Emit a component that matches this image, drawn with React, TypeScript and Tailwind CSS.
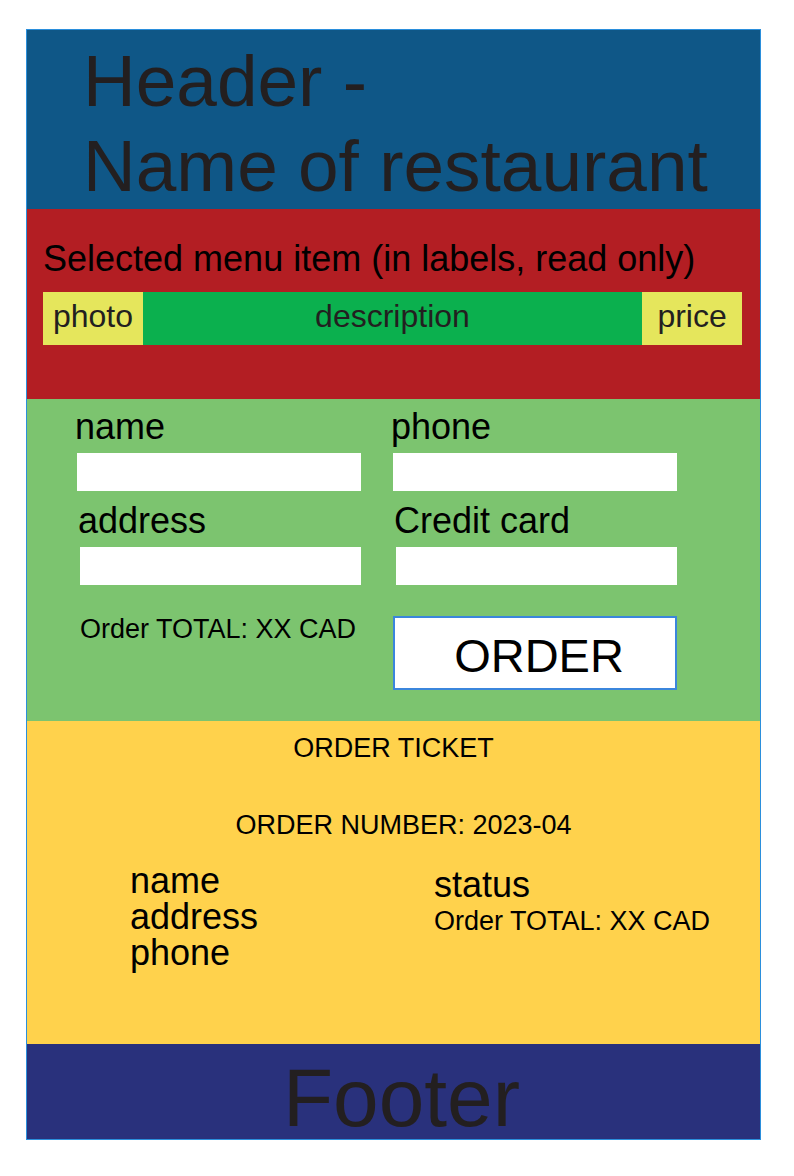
const inputClass = "mt-1.5 h-[38px] w-full bg-white px-2 text-2xl text-black outline-none";
const labelClass = "-ml-0.5 text-[36px] leading-10";

function Field({ id, label, type = "text" }: { id: string; label: string; type?: string }) {
  return (
    <div className="flex flex-col">
      <label htmlFor={id} className={labelClass}>
        {label}
      </label>
      <input id={id} name={id} type={type} className={inputClass} />
    </div>
  );
}

export default function App() {
  return (
    <div className="bg-white pt-[29px] pr-[33px] pb-9 pl-[26px] font-['Liberation_Sans',Arial,sans-serif] text-black">
      <div className="border border-[#2b8fdc]">
        <header className="bg-[#0f5787] pt-2 pb-px pl-14 text-[#231f20]">
          <h1 className="text-[73px] leading-[85px]">
            Header -<br />
            Name of restaurant
          </h1>
        </header>

        <section className="bg-[#b31e23] pt-[30px] pr-[18px] pb-[54px] pl-4">
          <h2 className="text-[36px] leading-10 whitespace-nowrap">
            Selected menu item (in labels, read only)
          </h2>
          <div className="mt-[13px] grid grid-cols-[1fr_5fr_1fr] text-center text-[32px] leading-[48px] text-[#231f20]">
            <div className="bg-[#e5e65c] pb-[5px]">photo</div>
            <div className="bg-[#0bb04e] pb-[5px]">description</div>
            <div className="bg-[#e5e65c] pb-[5px]">price</div>
          </div>
        </section>

        <form
          className="bg-[#7cc46f] pt-2 pr-[83px] pb-[31px] pl-[50px]"
          onSubmit={(event) => event.preventDefault()}
        >
          <div className="grid grid-cols-2 gap-x-8">
            <Field id="name" label="name" />
            <Field id="phone" label="phone" type="tel" />
          </div>
          <div className="mt-2.5 grid grid-cols-2 gap-x-[35px] pl-[3px]">
            <Field id="address" label="address" />
            <Field id="card" label="Credit card" />
          </div>
          <div className="mt-[31px] grid grid-cols-2 items-start gap-x-8">
            <p className="pl-[3px] text-[27px] leading-[26px] whitespace-nowrap">
              Order TOTAL: XX CAD
            </p>
            <button
              type="submit"
              className="h-[74px] cursor-pointer border-2 border-[#3b86dc] bg-white pt-1 pl-2 text-[47px] leading-none"
            >
              ORDER
            </button>
          </div>
        </form>

        <section className="bg-[#ffd24c] pt-[9px] pb-[73px]">
          <h2 className="text-center text-[27px] leading-9">ORDER TICKET</h2>
          <p className="mt-[41px] pl-5 text-center text-[27px] leading-9">
            ORDER NUMBER: 2023-04
          </p>
          <div className="mt-5 grid grid-cols-2 pr-[22px] pl-[103px] leading-9">
            <ul className="text-[36px]">
              <li>name</li>
              <li>address</li>
              <li>phone</li>
            </ul>
            <div className="pt-1">
              <p className="text-[36px]">status</p>
              <p className="text-[27px] whitespace-nowrap">Order TOTAL: XX CAD</p>
            </div>
          </div>
        </section>

        <footer className="bg-[#29317c] pt-3 pl-4 text-center text-[82px] leading-[83px] text-[#231f20]">
          Footer
        </footer>
      </div>
    </div>
  );
}
